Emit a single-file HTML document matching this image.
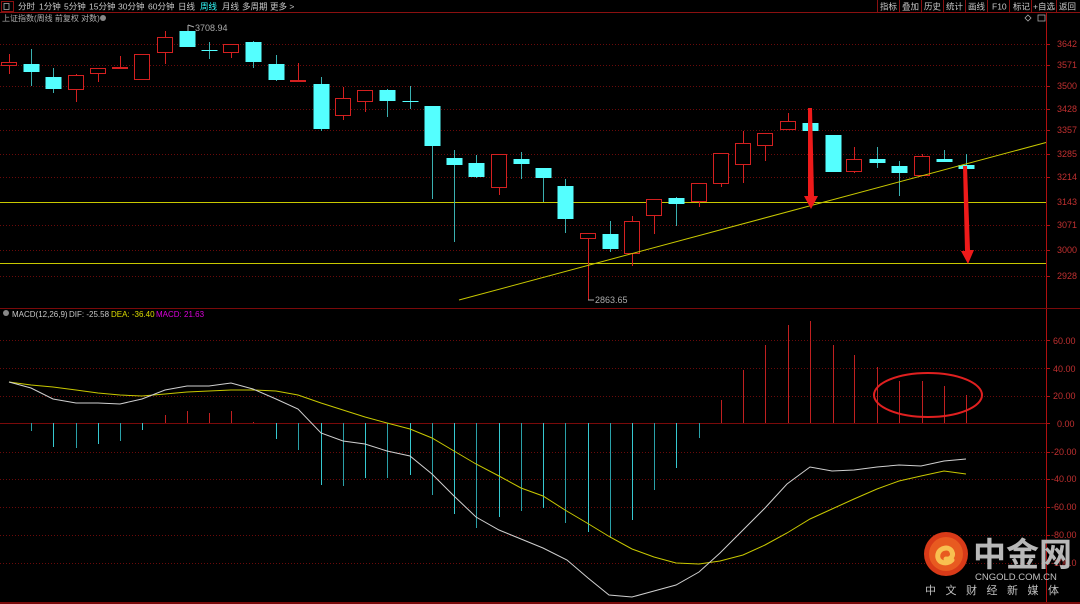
<!DOCTYPE html>
<html><head><meta charset="utf-8"><style>
html,body{margin:0;padding:0;background:#000;width:1080px;height:604px;overflow:hidden}
svg{display:block;font-family:"Liberation Sans","Noto Sans CJK SC",sans-serif}
</style></head><body>
<svg id="s" width="1080" height="604" viewBox="0 0 1080 604" xmlns="http://www.w3.org/2000/svg">
<rect width="1080" height="604" fill="#000"/>
<line x1="0" y1="12.5" x2="1080" y2="12.5" stroke="#8a1010"/>
<rect x="1.5" y="1.5" width="12" height="10" fill="none" stroke="#8a1010"/>
<rect x="4" y="3.5" width="5" height="6" fill="none" stroke="#aaa" stroke-width="0.8"/>
<g font-size="8.5" fill="#c8c8c8">
<text x="18" y="9.5">分时</text><text x="39" y="9.5">1分钟</text><text x="64" y="9.5">5分钟</text>
<text x="89" y="9.5">15分钟</text><text x="118" y="9.5">30分钟</text><text x="148" y="9.5">60分钟</text>
<text x="178" y="9.5">日线</text><text x="200" y="9.5" fill="#3ff">周线</text><text x="222" y="9.5">月线</text>
<text x="242" y="9.5">多周期</text><text x="270" y="9.5">更多 &gt;</text>
<text x="880" y="9.5">指标</text><text x="902" y="9.5">叠加</text><text x="924" y="9.5">历史</text>
<text x="946" y="9.5">统计</text><text x="968" y="9.5">画线</text><text x="992" y="9.5">F10</text>
<text x="1013" y="9.5">标记</text><text x="1033" y="9.5">+自选</text><text x="1059" y="9.5">返回</text>
<text x="2" y="21" fill="#b0b0b0" font-size="8">上证指数(周线 前复权 对数)</text>
</g>
<g font-size="8" fill="#c8c8c8">
<text x="12" y="317">MACD(12,26,9)</text><text x="69" y="317">DIF: -25.58</text>
<text x="111" y="317" fill="#dd0">DEA: -36.40</text><text x="156" y="317" fill="#d0d">MACD: 21.63</text>
<text x="195" y="31" fill="#aaa" font-size="9">3708.94</text><text x="595" y="303" fill="#aaa" font-size="9">2863.65</text>
</g>
<g stroke="#8a1010"><line x1="877.5" y1="0" x2="877.5" y2="12"/><line x1="899.5" y1="0" x2="899.5" y2="12"/><line x1="921.5" y1="0" x2="921.5" y2="12"/><line x1="943.5" y1="0" x2="943.5" y2="12"/><line x1="965.5" y1="0" x2="965.5" y2="12"/><line x1="987.5" y1="0" x2="987.5" y2="12"/><line x1="1009.5" y1="0" x2="1009.5" y2="12"/><line x1="1031.5" y1="0" x2="1031.5" y2="12"/><line x1="1056.5" y1="0" x2="1056.5" y2="12"/></g>
<circle cx="103" cy="18" r="3" fill="#888"/><circle cx="6" cy="313" r="3" fill="#888"/>
<path d="M1028 15l3 3-3 3-3-3z" fill="none" stroke="#aaa" stroke-width="0.8"/>
<rect x="1038" y="15" width="7" height="6" fill="none" stroke="#aaa" stroke-width="0.8"/>
<line x1="1046.5" y1="13" x2="1046.5" y2="604" stroke="#b01010"/>
<line x1="0" y1="308.5" x2="1080" y2="308.5" stroke="#7a0a0a"/>
<line x1="0" y1="603" x2="1080" y2="603" stroke="#7a0a0a" stroke-width="2"/>
<g id="g"></g>
<g font-size="9" fill="#c03030">
<text x="1057" y="47">3642</text><text x="1057" y="68">3571</text><text x="1057" y="89">3500</text><text x="1057" y="112">3428</text>
<text x="1057" y="133">3357</text><text x="1057" y="157">3285</text><text x="1057" y="180">3214</text><text x="1057" y="205">3143</text>
<text x="1057" y="228">3071</text><text x="1057" y="253">3000</text><text x="1057" y="279">2928</text>
<text x="1053" y="344">60.00</text><text x="1053" y="372">40.00</text><text x="1053" y="399">20.00</text><text x="1057" y="427">0.00</text>
<text x="1051" y="455">-20.00</text><text x="1051" y="482">-40.00</text><text x="1051" y="510">-60.00</text><text x="1051" y="538">-80.00</text><text x="1051" y="566">-100.0</text>
</g>
<circle cx="946" cy="554" r="22" fill="#d83a18"/>
<circle cx="946" cy="554" r="17" fill="#e85a20"/>
<path d="M952 560c-6 6-16 2-14-6 2-7 12-8 14-2 2 4-2 8-6 7" fill="none" stroke="#f8c050" stroke-width="5" stroke-linecap="round"/>
<text x="973" y="566" font-size="33" font-weight="bold" fill="#b8b8b8" font-family="'Noto Sans CJK SC',sans-serif">中金网</text>
<text x="975" y="580" font-size="9.5" fill="#c0c0c0">CNGOLD.COM.CN</text>
<text x="925" y="594" font-size="11" fill="#c0c0c0" letter-spacing="9.5" font-family="'Noto Sans CJK SC',sans-serif">中文财经新媒体</text>
</svg>
<script>
var g=document.getElementById('g'),h='';
function L(a,b,c,d,s,w,x){h+='<line x1="'+a+'" y1="'+b+'" x2="'+c+'" y2="'+d+'" stroke="'+s+'" stroke-width="'+(w||1)+'" '+(x||'')+'/>';}
[44,65,86,109,130,154,177,225,250,276].forEach(function(y){L(0,y+.5,1046,y+.5,'#6a0a0a',1,'stroke-dasharray="1,2"');L(1046,y+.5,1050,y+.5,'#b01010');});
[340,368,396,452,479,507,535,563].forEach(function(y){L(0,y+.5,1046,y+.5,'#6a0a0a',1,'stroke-dasharray="1,2"');L(1046,y+.5,1050,y+.5,'#b01010');});
L(0,423.5,1046,423.5,'#7a0a0a');L(1046,423.5,1050,423.5,'#b01010');
L(0,202.5,1046,202.5,'#c8c800');L(0,263.5,1046,263.5,'#c8c800');
var C=[[9,'r',62,65,54,74],[31,'c',64,72,49,86],[53,'c',77,89,68,93],[76,'r',75,89,74,102],[98,'r',68,73,68,82],[120,'r',67,68,56,69],[142,'r',54,79,54,79],[165,'r',37,52,31,64],[187,'c',31,47,31,47],[209,'c',50,51,42,59],[231,'r',44,52,44,58],[253,'c',42,62,41,68],[276,'c',64,80,55,81],[298,'r',80,81,63,82],[321,'c',84,129,77,131],[343,'r',98,115,87,120],[365,'r',90,101,90,112],[387,'c',90,101,89,117],[410,'c',101,102,86,109],[432,'c',106,146,106,199],[454,'c',158,165,150,242],[476,'c',163,177,155,178],[499,'r',154,187,154,195],[521,'c',159,164,152,179],[543,'c',168,178,168,202],[565,'c',186,219,179,233],[588,'r',233,238,233,300],[610,'c',234,249,221,252],[632,'r',221,253,216,266],[654,'r',199,215,199,234],[676,'c',198,204,197,226],[699,'r',183,201,183,207],[721,'r',153,183,153,187],[743,'r',143,164,131,183],[765,'r',133,145,133,161],[788,'r',121,129,113,130],[810,'c',123,131,108,131],[833,'c',135,172,135,172],[854,'r',159,171,147,173],[877,'c',159,163,147,168],[899,'c',166,173,161,196],[922,'r',156,175,154,175],[944,'c',159,162,150,162],[966,'c',165,169,154,169]];
C.forEach(function(k){var x=k[0],col=k[1]=='r'?'#d42020':'#54ffff',wc=k[1]=='r'?'#d42020':'#3ab0b0';
L(x+.5,k[4],x+.5,k[5],wc);
var hh=Math.max(1,k[3]-k[2]);
if(k[1]=='r')h+='<rect x="'+(x-7.5)+'" y="'+(k[2]+.5)+'" width="15" height="'+hh+'" fill="#000" stroke="'+col+'"/>';
else h+='<rect x="'+(x-7.5)+'" y="'+k[2]+'" width="16" height="'+hh+'" fill="'+col+'"/>';});
L(188,31,188,25,'#aaa');L(188,25,194,27,'#aaa');L(588,300,594,300,'#aaa');
L(459,300,1046,142.5,'#c8c800');
var B=[423,431,447,448,444,441,430,415,411,413,411,422,439,450,485,486,478,478,475,495,514,528,517,511,508,523,532,538,520,490,468,438,400,370,345,325,321,345,355,367,381,381,386,395];
B.forEach(function(y,i){var x=C[i][0]+.5;var col=y<423?'#c02020':(i%2?'#2aa0a8':'#36c8d0');L(x,423,x,y,col);});
var D=[[9,382],[31,388],[53,399],[76,403],[98,403],[120,404],[142,399],[165,390],[187,386],[209,386],[231,383],[253,389],[276,399],[298,409],[321,433],[343,441],[365,444],[387,451],[410,456],[432,474],[454,496],[476,517],[499,530],[521,539],[543,548],[567,560],[588,578],[609,595],[632,597],[654,591],[676,585],[699,572],[720,553],[743,530],[765,508],[787,484],[810,467],[832,471],[854,470],[877,467],[899,465],[921,466],[944,461],[966,459]];
var E=[[9,382],[31,385],[53,387],[76,390],[98,393],[120,395],[142,396],[165,394],[187,392],[209,391],[231,390],[253,390],[276,391],[298,395],[321,403],[343,410],[365,417],[387,423],[410,429],[432,438],[454,451],[476,464],[499,476],[521,488],[543,496],[565,510],[587,523],[610,537],[632,549],[654,557],[676,563],[699,564],[720,561],[743,555],[765,545],[787,533],[810,519],[832,509],[854,499],[877,489],[899,481],[921,476],[944,471],[966,474]];
function P(a,c){h+='<polyline fill="none" stroke="'+c+'" points="'+a.map(function(p){return p.join(',')}).join(' ')+'"/>';}
P(E,'#c8c800');P(D,'#d0d0d0');
h+='<ellipse cx="928" cy="395" rx="54" ry="22" fill="none" stroke="#e02020" stroke-width="2"/>';
h+='<polygon points="808,108 812,108 814,196 818,196 811,209 804,196 808,196" fill="#ee1a1a"/>';
h+='<polygon points="963,166 967,166 970,250 974,250 968,264 961,251 965,251" fill="#ee1a1a"/>';
g.innerHTML=h;
</script>
</body></html>
